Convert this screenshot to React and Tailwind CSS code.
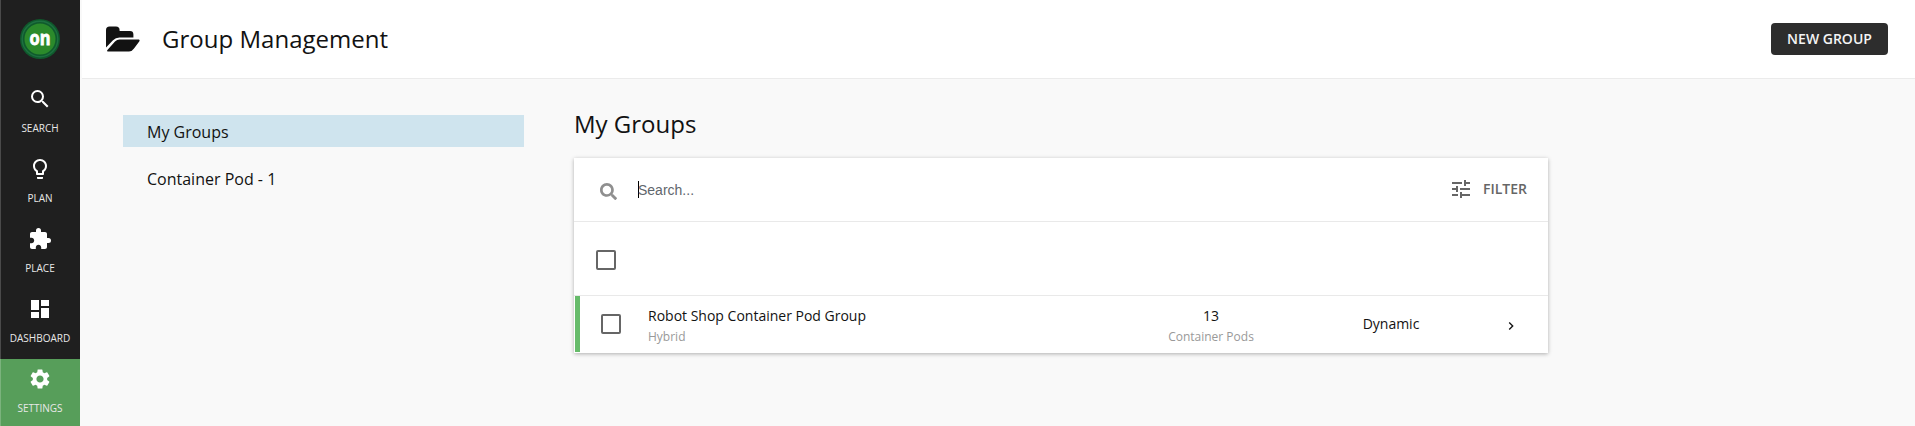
import { MdSearch, MdLightbulbOutline, MdExtension, MdDashboard, MdSettings, MdTune, MdChevronRight } from "react-icons/md";
import { FaSearch } from "react-icons/fa";

const navItems = [
  { label: "SEARCH", icon: MdSearch },
  { label: "PLAN", icon: MdLightbulbOutline },
  { label: "PLACE", icon: MdExtension },
  { label: "DASHBOARD", icon: MdDashboard },
  { label: "SETTINGS", icon: MdSettings, active: true },
];

function Logo() {
  return (
    <svg className="mt-[19px] size-10 shrink-0" viewBox="0 0 40 40">
      <circle cx="20" cy="20" r="20" fill="#0f5a2c" />
      <circle cx="20" cy="20" r="17.8" fill="none" stroke="#1d7040" strokeWidth="1.4" />
      <circle cx="20" cy="20" r="15.5" fill="#2b8a2b" />
      <text x="20" y="25.7" textAnchor="middle" textLength="21" lengthAdjust="spacingAndGlyphs" fill="#fff" stroke="#fff" strokeWidth="0.8" fontFamily="Open Sans, sans-serif" fontWeight="700" fontSize="20">on</text>
    </svg>
  );
}

function FolderIcon() {
  return (
    <svg className="h-[26px] w-[35px]" viewBox="0 0 35 26" fill="#121212">
      <path d="M0 21.5V4.2Q0 .6 3.6.6H10Q13.6.6 13.6 4.2V5H24Q27.4 5 27.4 8.4V11.6H13.5Q9.6 11.6 7 14.2Z" />
      <path d="M1.2 24.2L9 15.4Q11 13.6 13.6 13.6H32.8Q34.2 13.8 33.4 15.2L28 22.4Q26 25.4 23 25.4H2Q.6 25.4 1.2 24.2Z" />
    </svg>
  );
}

function Checkbox({ className }) {
  return <span role="checkbox" aria-checked="false" className={`size-5 shrink-0 rounded-[2px] border-2 border-[#666] ${className}`} />;
}

export default function App() {
  return (
    <div className="flex h-[426px] w-full overflow-hidden bg-[#f9f9f9] font-['Open_Sans',sans-serif] text-[#121212]">
      <nav className="flex w-20 shrink-0 flex-col items-center bg-[#1f1f1f] shadow-[inset_1px_0_0_#4a4a4a]">
        <Logo />
        <div className="mt-5 w-full">
          {navItems.map(({ label, icon: Icon, active }) => (
            <div key={label} className={`flex h-[70px] flex-col items-center pt-2 text-white ${active ? "bg-[#579e5a] shadow-[inset_1px_0_0_#7bb37d]" : ""}`}>
              <Icon className="size-6" />
              <span className="mt-2.5 text-[10px] leading-[14px] text-[#e8e8e8]">{label}</span>
            </div>
          ))}
        </div>
      </nav>
      <div className="flex min-w-0 grow flex-col pl-0.5">
        <header className="flex h-[79px] shrink-0 items-center border-b border-[#ebebeb] bg-white pr-[27px] pl-6">
          <FolderIcon />
          <h1 className="ml-[21px] text-2xl tracking-[0.02px]">Group Management</h1>
          <button className="ml-auto h-8 w-[117px] rounded bg-[#2d2d2d] text-sm font-semibold text-[#f4f4f4]">NEW GROUP</button>
        </header>
        <div className="flex">
          <aside className="mt-9 ml-[41px] w-[401px] text-base">
            <div className="h-8 bg-[#cfe4ee] pt-px pl-6 leading-8">My Groups</div>
            <div className="mt-4 h-8 pl-6 leading-8">Container Pod - 1</div>
          </aside>
          <main className="ml-[50px] w-[974px]">
            <h2 className="mt-[29px] text-2xl leading-8">My Groups</h2>
            <section className="mt-[18px] h-[195px] bg-white shadow-[0_1px_4px_rgba(0,0,0,0.3)]">
              <div className="flex h-16 items-center border-b border-[#e9e9e9] pr-[21px] pl-[26px]">
                <FaSearch className="mt-1 size-[17px] text-[#8f8f8f]" />
                <div className="ml-[21px] flex items-center">
                  <span className="h-[17px] w-px bg-black" />
                  <span className="-ml-px font-['Liberation_Sans',sans-serif] text-sm text-[#5f666d]">Search...</span>
                </div>
                <div className="mb-0.5 ml-auto flex items-center text-[#666]">
                  <MdTune className="size-6" />
                  <span className="ml-2.5 text-sm font-semibold">FILTER</span>
                </div>
              </div>
              <div className="flex h-[74px] items-center border-b border-[#e9e9e9] pl-[22px]">
                <Checkbox className="mt-0.5" />
              </div>
              <div className="mx-px flex h-14 items-center border-l-5 border-[#66bb6a]">
                <Checkbox className="ml-[21px]" />
                <div className="mt-1 ml-[27px] w-[460px]">
                  <div className="text-sm leading-5">Robot Shop Container Pod Group</div>
                  <div className="text-xs leading-[21px] text-[#999]">Hybrid</div>
                </div>
                <div className="mt-1 w-[206px] text-center">
                  <div className="text-sm leading-5">13</div>
                  <div className="text-xs leading-[21px] text-[#999]">Container Pods</div>
                </div>
                <div className="w-[154px] text-center text-sm">Dynamic</div>
                <MdChevronRight className="mt-1 mr-7 ml-auto size-4" />
              </div>
            </section>
          </main>
        </div>
      </div>
    </div>
  );
}
